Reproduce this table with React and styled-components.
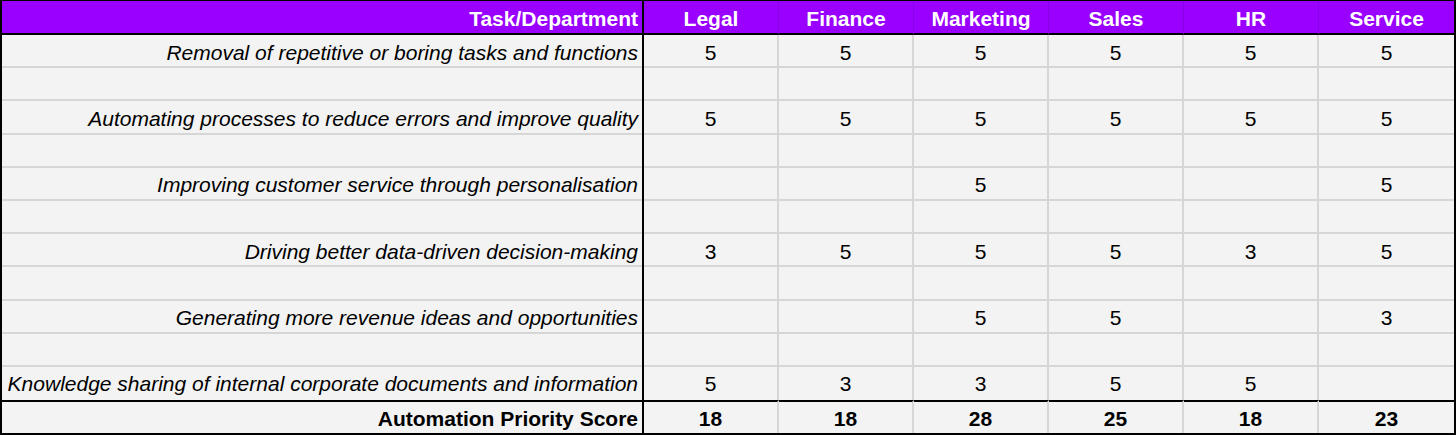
import React from 'react';
import styled, { createGlobalStyle } from 'styled-components';

const GlobalStyle = createGlobalStyle`
  html, body {
    margin: 0;
    padding: 0;
    background: #ffffff;
  }
  * {
    box-sizing: border-box;
  }
`;

const Sheet = styled.div`
  width: 1456px;
  display: grid;
  grid-template-columns: 640px 2px repeat(6, 135px);
  border-top: 1px solid #000;
  border-left: 2px solid #000;
  border-right: 2px solid #000;
  border-bottom: 2px solid #000;
  font-family: 'Liberation Sans', Arial, sans-serif;
  font-size: 21px;
  color: #000;
  background: #f3f3f3;
`;

const Divider = styled.div`
  background: #000;
`;

const Cell = styled.div`
  display: flex;
  align-items: center;
  justify-content: ${p => (p.$label ? 'flex-end' : 'center')};
  padding-right: ${p => (p.$label ? '4px' : '0')};
  white-space: nowrap;
  overflow: hidden;
`;

const HeadCell = styled(Cell)`
  height: 34px;
  padding-top: 4px;
  background: #9900ff;
  color: #ffffff;
  font-weight: 700;
  border-bottom: 2px solid #000;
  border-right: ${p => (p.$last || p.$label ? 'none' : '1px solid #8a00e4')};
`;

const HeadDivider = styled(Divider)`
  height: 34px;
`;

const BodyCell = styled(Cell)`
  height: 33.2px;
  font-style: ${p => (p.$label ? 'italic' : 'normal')};
  border-bottom: ${p => (p.$lastRow ? 'none' : '2px solid #d6d6d6')};
  border-right: ${p => (p.$last || p.$label ? 'none' : '2px solid #d6d6d6')};
  padding-top: ${p => (p.$lastRow ? '2px' : '4px')};
`;

const TotalCell = styled(Cell)`
  height: 33px;
  padding-top: 2px;
  font-weight: 700;
  border-top: 2px solid #000;
  border-right: ${p => (p.$last || p.$label ? 'none' : '2px solid #d6d6d6')};
`;

const TotalDivider = styled(Divider)`
  height: 33px;
`;

const departments = ['Legal', 'Finance', 'Marketing', 'Sales', 'HR', 'Service'];

const rows = [
  ['Removal of repetitive or boring tasks and functions', [5, 5, 5, 5, 5, 5]],
  ['', []],
  ['Automating processes to reduce errors and improve quality', [5, 5, 5, 5, 5, 5]],
  ['', []],
  ['Improving customer service through personalisation', ['', '', 5, '', '', 5]],
  ['', []],
  ['Driving better data-driven decision-making', [3, 5, 5, 5, 3, 5]],
  ['', []],
  ['Generating more revenue ideas and opportunities', ['', '', 5, 5, '', 3]],
  ['', []],
  ['Knowledge sharing of internal corporate documents and information', [5, 3, 3, 5, 5, '']],
];

const totals = [18, 18, 28, 25, 18, 23];

export default function App() {
  return (
    <>
      <GlobalStyle />
      <Sheet>
        <HeadCell $label>Task/Department</HeadCell>
        <HeadDivider />
        {departments.map((d, i) => (
          <HeadCell key={d} $last={i === departments.length - 1}>{d}</HeadCell>
        ))}

        {rows.map(([label, values], r) => {
          const lastRow = r === rows.length - 1;
          return (
            <React.Fragment key={r}>
              <BodyCell $label $lastRow={lastRow}>{label}</BodyCell>
              <Divider />
              {departments.map((d, i) => (
                <BodyCell key={d} $lastRow={lastRow} $last={i === departments.length - 1}>
                  {values[i] ?? ''}
                </BodyCell>
              ))}
            </React.Fragment>
          );
        })}

        <TotalCell $label>Automation Priority Score</TotalCell>
        <TotalDivider />
        {totals.map((t, i) => (
          <TotalCell key={i} $last={i === totals.length - 1}>{t}</TotalCell>
        ))}
      </Sheet>
    </>
  );
}
